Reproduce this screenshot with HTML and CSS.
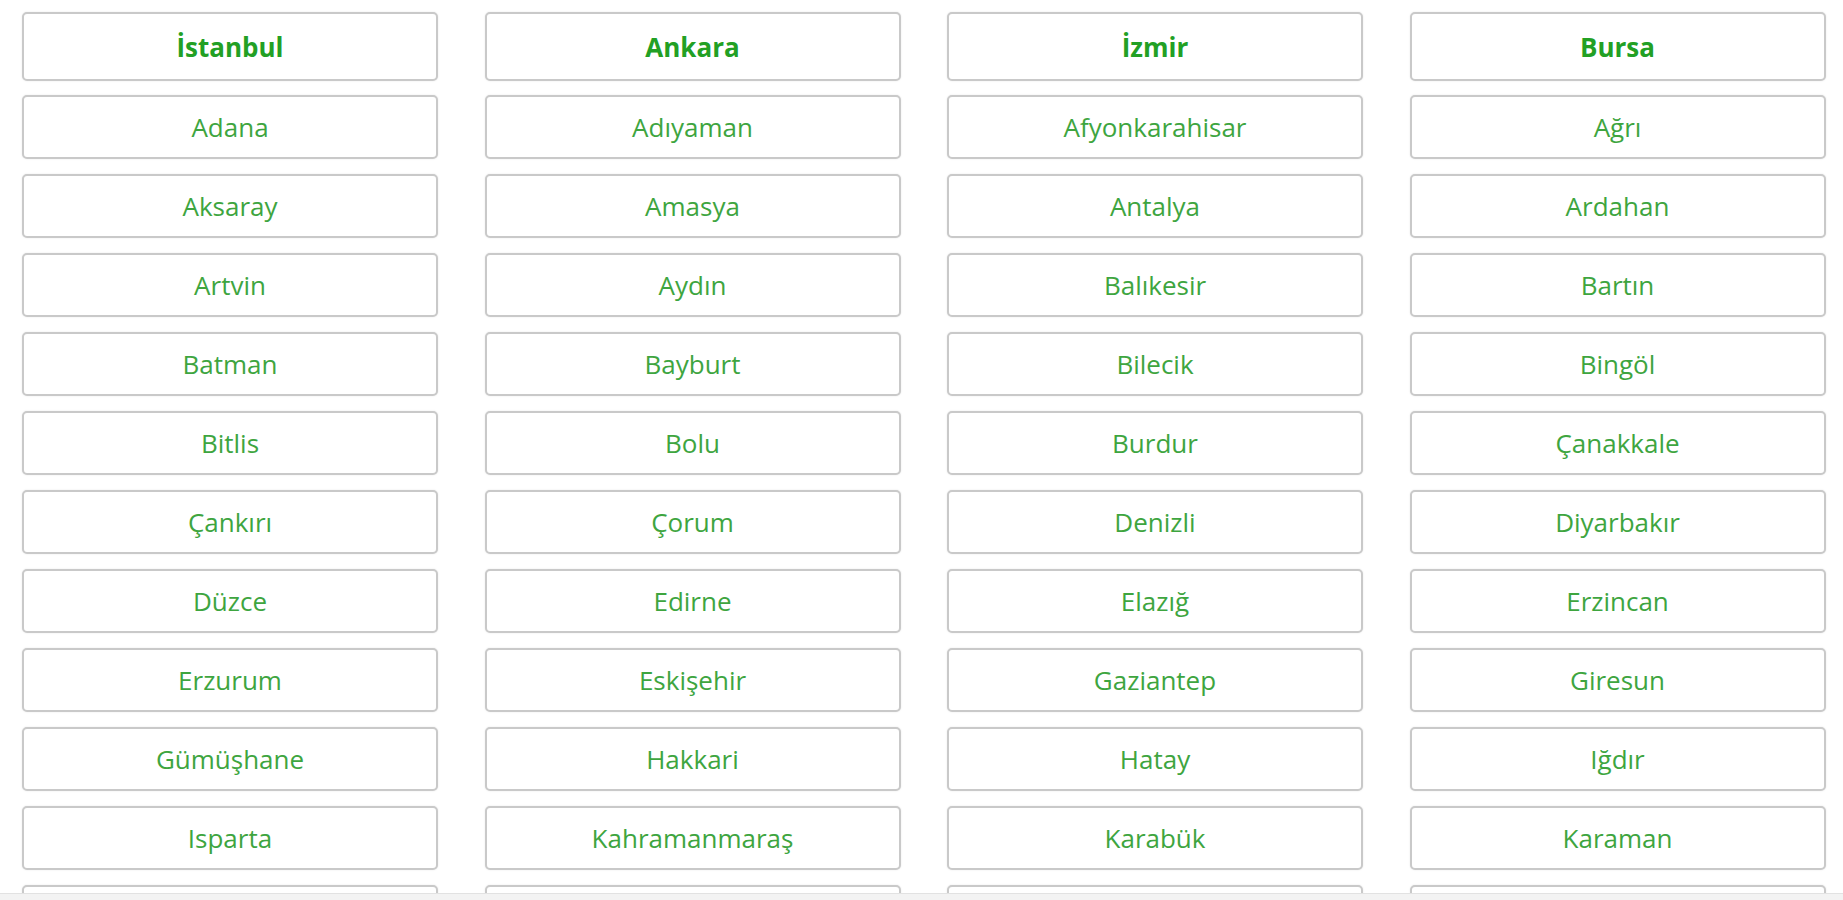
FILE: index.html
```html
<!DOCTYPE html>
<html lang="tr">
<head>
<meta charset="utf-8">
<title>İller</title>
<link rel="stylesheet" href="styles.css">
</head>
<body>
<div class="cities">
  <div class="col">
    <a class="city head">İstanbul</a>
    <a class="city">Adana</a>
    <a class="city">Aksaray</a>
    <a class="city">Artvin</a>
    <a class="city">Batman</a>
    <a class="city">Bitlis</a>
    <a class="city">Çankırı</a>
    <a class="city">Düzce</a>
    <a class="city">Erzurum</a>
    <a class="city">Gümüşhane</a>
    <a class="city">Isparta</a>
    <a class="city"></a>
  </div>
  <div class="col">
    <a class="city head">Ankara</a>
    <a class="city">Adıyaman</a>
    <a class="city">Amasya</a>
    <a class="city">Aydın</a>
    <a class="city">Bayburt</a>
    <a class="city">Bolu</a>
    <a class="city">Çorum</a>
    <a class="city">Edirne</a>
    <a class="city">Eskişehir</a>
    <a class="city">Hakkari</a>
    <a class="city">Kahramanmaraş</a>
    <a class="city"></a>
  </div>
  <div class="col">
    <a class="city head">İzmir</a>
    <a class="city">Afyonkarahisar</a>
    <a class="city">Antalya</a>
    <a class="city">Balıkesir</a>
    <a class="city">Bilecik</a>
    <a class="city">Burdur</a>
    <a class="city">Denizli</a>
    <a class="city">Elazığ</a>
    <a class="city">Gaziantep</a>
    <a class="city">Hatay</a>
    <a class="city">Karabük</a>
    <a class="city"></a>
  </div>
  <div class="col">
    <a class="city head">Bursa</a>
    <a class="city">Ağrı</a>
    <a class="city">Ardahan</a>
    <a class="city">Bartın</a>
    <a class="city">Bingöl</a>
    <a class="city">Çanakkale</a>
    <a class="city">Diyarbakır</a>
    <a class="city">Erzincan</a>
    <a class="city">Giresun</a>
    <a class="city">Iğdır</a>
    <a class="city">Karaman</a>
    <a class="city"></a>
  </div>
</div>
<div class="bottom-bar"></div>
</body>
</html>
```
FILE: styles.css
```css
html, body {
  margin: 0;
  padding: 0;
  background: #ffffff;
  overflow: hidden;
}

body {
  font-family: "Open Sans", "Noto Sans", "Liberation Sans", sans-serif;
}

.cities {
  display: grid;
  grid-template-columns: repeat(4, 416px);
  column-gap: 46.5px;
  padding: 12px 0 0 22px;
}

.col {
  display: flex;
  flex-direction: column;
  gap: 15px;
}

.city {
  box-sizing: border-box;
  height: 64px;
  display: flex;
  align-items: center;
  justify-content: center;
  border: 2px solid #c9c9c9;
  border-radius: 5px;
  box-shadow: 0 0 2px rgba(0, 0, 0, 0.1);
  color: #3ea53f;
  font-size: 26px;
  text-decoration: none;
  background: #fff;
}

.city.head {
  height: 69px;
  margin-bottom: -1px;
  font-weight: 700;
  color: #22a024;
}

.bottom-bar {
  position: fixed;
  left: 0;
  right: 0;
  bottom: 0;
  height: 6px;
  background: #f3f3f3;
  border-top: 1px solid #e2e2e2;
}
```
